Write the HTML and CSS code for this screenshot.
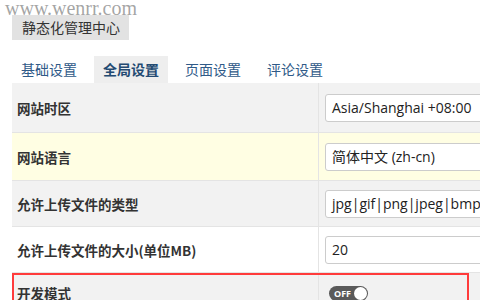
FILE: index.html
```html
<!DOCTYPE html>
<html lang="zh-CN">
<head>
<meta charset="utf-8">
<title>静态化管理中心</title>
<link rel="stylesheet" href="styles.css">
</head>
<body>
<div class="page">
  <div class="watermark">www.wenrr.com</div>
  <div class="header">
    <span class="title-box">静态化管理中心</span>
  </div>
  <div class="tabs">
    <span class="tab">基础设置</span>
    <span class="tab active">全局设置</span>
    <span class="tab">页面设置</span>
    <span class="tab">评论设置</span>
  </div>
  <div class="table">
    <div class="row gray r1">
      <div class="label">网站时区</div>
      <div class="value"><div class="input">Asia/Shanghai +08:00</div></div>
    </div>
    <div class="row yellow r2">
      <div class="label">网站语言</div>
      <div class="value"><div class="input">简体中文 (zh-cn)</div></div>
    </div>
    <div class="row gray r3">
      <div class="label">允许上传文件的类型</div>
      <div class="value"><div class="input">jpg|gif|png|jpeg|bmp|psd|zip|rar</div></div>
    </div>
    <div class="row white r4">
      <div class="label">允许上传文件的大小(单位MB)</div>
      <div class="value"><div class="input">20</div></div>
    </div>
    <div class="row gray r5 highlight">
      <div class="label">开发模式</div>
      <div class="value"><span class="toggle"><span class="toggle-text">OFF</span><span class="knob"></span></span></div>
    </div>
  </div>
</div>
</body>
</html>
```
FILE: styles.css
```css
html, body {
  margin: 0;
  padding: 0;
  background: #ffffff;
}
.page {
  position: relative;
  width: 480px;
  height: 300px;
  overflow: hidden;
  font-family: "Noto Sans CJK SC", "Open Sans", sans-serif;
  color: #333333;
}
.watermark {
  position: absolute;
  top: -2px;
  left: 5px;
  font-family: "Liberation Serif", serif;
  font-size: 20px;
  line-height: 20px;
  color: rgba(125, 125, 125, 0.7);
  z-index: 2;
}
.header {
  padding: 14px 0 0 12px;
  height: 25px;
}
.title-box {
  display: inline-block;
  height: 25px;
  line-height: 25px;
  padding: 0 9px 0 10px;
  background: #e2e2e2;
  font-size: 14px;
  color: #333333;
}
.tabs {
  display: flex;
  gap: 8px;
  margin-top: 17px;
  padding-left: 12px;
  height: 27px;
}
.tab {
  display: block;
  padding: 0 9px;
  height: 27px;
  line-height: 27px;
  font-size: 14px;
  color: #2f5a88;
}
.tab.active {
  background: #eeeeee;
  font-weight: bold;
  color: #234a72;
}
.table {
  margin-left: 12px;
  width: 520px;
}
.row {
  display: grid;
  grid-template-columns: 307px 1fr;
  border-bottom: 1px solid #e4e4e4;
}
.row.gray { background: #f2f2f2; }
.row.yellow { background: #fffee3; }
.row.white { background: #ffffff; }
.r1 { height: 49px; }
.r2 { height: 47px; }
.r3 { height: 45px; }
.r4 { height: 45px; }
.r5 { height: 40px; }
.label {
  display: flex;
  align-items: center;
  padding-left: 5px;
  font-size: 13.5px;
  font-weight: bold;
  color: #333333;
  border-right: 1px solid #e4e4e4;
}
.value {
  display: flex;
  align-items: center;
  padding-left: 6px;
}
.input {
  box-sizing: border-box;
  width: 320px;
  height: 28px;
  line-height: 26px;
  padding: 0 6px;
  border: 1px solid #cccccc;
  border-radius: 3px;
  background: #ffffff;
  font-family: "Open Sans", "Noto Sans CJK SC", sans-serif;
  font-size: 14px;
  color: #222222;
  white-space: nowrap;
  overflow: hidden;
}
.r5 .value {
  align-items: flex-start;
  padding-top: 13px;
  padding-left: 10px;
}
.row.highlight {
  position: relative;
}
.row.highlight::after {
  content: "";
  position: absolute;
  left: 0;
  top: 0;
  width: 457px;
  height: 40px;
  border: 2px solid #ff3b3b;
  box-sizing: border-box;
}
.toggle {
  display: inline-flex;
  align-items: center;
  justify-content: space-between;
  width: 39px;
  height: 15px;
  border-radius: 8px;
  background: #5a5a5a;
  padding: 0 1px 0 5px;
  box-sizing: border-box;
}
.toggle-text {
  font-family: "Open Sans", sans-serif;
  font-size: 9px;
  font-weight: bold;
  color: #ffffff;
  line-height: 15px;
}
.knob {
  width: 13px;
  height: 13px;
  border-radius: 50%;
  background: #ffffff;
}
```
